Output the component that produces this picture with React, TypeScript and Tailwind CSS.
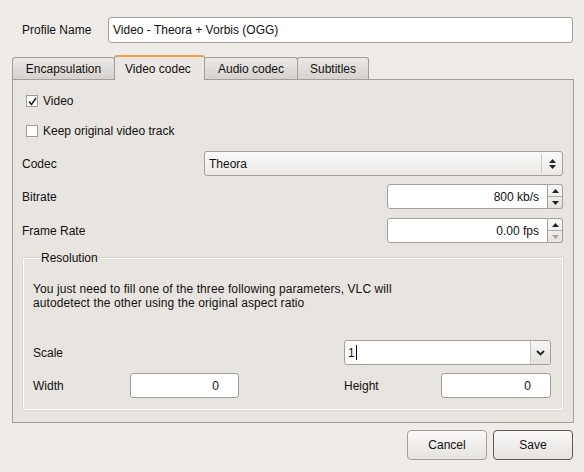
import React from 'react';

const fieldBorder = 'border border-[#a29e9a]';

const CheckBox = ({ checked, label }: { checked: boolean; label: string }) => (
  <div className="flex items-center h-[12px]">
    <div className={`w-[12px] h-[12px] bg-white ${fieldBorder} flex items-center justify-center`}>
      {checked && (
        <svg width="9" height="9" viewBox="0 0 9 9">
          <path d="M1 4.5 L3.5 7.5 L8 1" fill="none" stroke="#222" strokeWidth="1.6" />
        </svg>
      )}
    </div>
    <span className="ml-[5px]">{label}</span>
  </div>
);

const Tri = ({ up, color = '#222' }: { up: boolean; color?: string }) => (
  <svg width="7" height="4" viewBox="0 0 7 4">
    <path d={up ? 'M0 4 L3.5 0 L7 4 Z' : 'M0 0 L3.5 4 L7 0 Z'} fill={color} />
  </svg>
);

const SpinBox = ({ value, downDisabled }: { value: string; downDisabled?: boolean }) => (
  <div className="flex h-[25px] w-[176px]">
    <div className={`flex-1 bg-white ${fieldBorder} rounded-l-[3px] flex items-center justify-end pr-[8px]`}>
      {value}
    </div>
    <div className={`w-[15px] ${fieldBorder} border-l-0 rounded-r-[3px] flex flex-col bg-gradient-to-b from-[#f9f8f7] to-[#e6e3e0]`}>
      <div className="flex-1 flex items-center justify-center border-b border-[#b3afab]">
        <Tri up />
      </div>
      <div className="flex-1 flex items-center justify-center">
        <Tri up={false} color={downDisabled ? '#a8a4a0' : '#222'} />
      </div>
    </div>
  </div>
);

const Tab = ({ label, active, className }: { label: string; active?: boolean; className: string }) => (
  <div
    className={`${className} flex items-center border border-b-0 border-[#a29e9a] rounded-t-[3px] ${
      active
        ? 'h-[25px] -mb-px border-t-2 border-t-[#f2a14a] bg-[#eae6e2] z-10 pl-[10px]'
        : 'h-[22px] bg-gradient-to-b from-[#ebe8e5] to-[#d6d2ce] justify-center'
    }`}
  >
    {label}
  </div>
);

const Button = ({ label, primary }: { label: string; primary?: boolean }) => (
  <div
    className={`w-[80px] h-[30px] flex items-center justify-center rounded-[4px] border ${
      primary ? 'border-[#5b5855]' : 'border-[#a29e9a]'
    } bg-gradient-to-b from-[#faf9f8] to-[#e5e2df]`}
  >
    {label}
  </div>
);

export default function App() {
  return (
    <div className="w-[584px] h-[472px] bg-[#efebe7] font-['Liberation_Sans',Arial,sans-serif] text-[12px] text-[#111] overflow-hidden">
      <div className="flex items-center pt-[17px] pl-[22px]">
        <span className="w-[86px]">Profile Name</span>
        <div className={`w-[465px] h-[26px] bg-white ${fieldBorder} rounded-[3px] flex items-center pl-[4px]`}>
          Video - Theora + Vorbis (OGG)
        </div>
      </div>

      <div className="pl-[12px] mt-[11px] flex items-end h-[25px] relative">
        <Tab label="Encapsulation" className="w-[103px]" />
        <Tab label="Video codec" active className="w-[91px] -ml-px" />
        <Tab label="Audio codec" className="w-[94px] -ml-px" />
        <Tab label="Subtitles" className="w-[72px] -ml-px" />
      </div>

      <div className="ml-[12px] w-[562px] h-[344px] border border-[#a29e9a] bg-[#e8e4e0] pl-[9px] pr-[10px] flex flex-col">
        <div className="mt-[15px] pl-[4px]">
          <CheckBox checked label="Video" />
        </div>
        <div className="mt-[18px] pl-[4px]">
          <CheckBox checked={false} label="Keep original video track" />
        </div>

        <div className="mt-[14px] flex items-center h-[25px]">
          <span className="w-[182px]">Codec</span>
          <div className={`flex-1 h-[25px] ${fieldBorder} rounded-[3px] flex items-center bg-gradient-to-b from-[#fbfaf9] to-[#ebe8e5]`}>
            <span className="flex-1 pl-[4px]">Theora</span>
            <div className="w-px h-[19px] bg-[#cfcbc7]" />
            <div className="w-[20px] flex flex-col items-center gap-[2px]">
              <Tri up />
              <Tri up={false} />
            </div>
          </div>
        </div>

        <div className="mt-[8px] flex items-center justify-between">
          <span>Bitrate</span>
          <SpinBox value="800 kb/s" />
        </div>
        <div className="mt-[9px] flex items-center justify-between">
          <span>Frame Rate</span>
          <SpinBox value="0.00 fps" downDisabled />
        </div>

        <fieldset className="mt-[8px] ml-[1px] border border-white shadow-[0_0_0_1px_#dcd8d4] pl-[9px] pr-[9px] pb-[11px]">
          <legend className="ml-[6px] px-[2px] leading-[14px]">Resolution</legend>
          <div className="mt-[17px] leading-[14px] tracking-[0.1px]">
            You just need to fill one of the three following parameters, VLC will
            <br />
            autodetect the other using the original aspect ratio
          </div>

          <div className="mt-[30px] flex items-center h-[25px]">
            <span className="w-[311px]">Scale</span>
            <div className={`w-[207px] h-[25px] bg-white ${fieldBorder} rounded-[3px] flex items-center`}>
              <span className="flex-1 pl-[3px] flex items-center">
                1<span className="inline-block w-px h-[15px] bg-black ml-[1px]" />
              </span>
              <div className="w-[20px] h-full border-l border-[#c9c5c1] rounded-r-[3px] bg-gradient-to-b from-[#f7f6f5] to-[#e3e0dd] flex items-center justify-center">
                <svg width="9" height="6" viewBox="0 0 9 6">
                  <path d="M1 1 L4.5 4.5 L8 1" fill="none" stroke="#222" strokeWidth="1.8" />
                </svg>
              </div>
            </div>
          </div>

          <div className="mt-[8px] flex items-center h-[25px]">
            <span className="w-[97px]">Width</span>
            <div className={`w-[109px] h-[25px] bg-white ${fieldBorder} rounded-[3px] flex items-center justify-end pr-[19px]`}>0</div>
            <span className="w-[105px]" />
            <span className="w-[97px]">Height</span>
            <div className={`w-[110px] h-[25px] bg-white ${fieldBorder} rounded-[3px] flex items-center justify-end pr-[19px]`}>0</div>
          </div>
        </fieldset>
      </div>

      <div className="flex justify-end gap-[6px] pr-[11px] mt-[7px]">
        <Button label="Cancel" />
        <Button label="Save" primary />
      </div>
    </div>
  );
}
